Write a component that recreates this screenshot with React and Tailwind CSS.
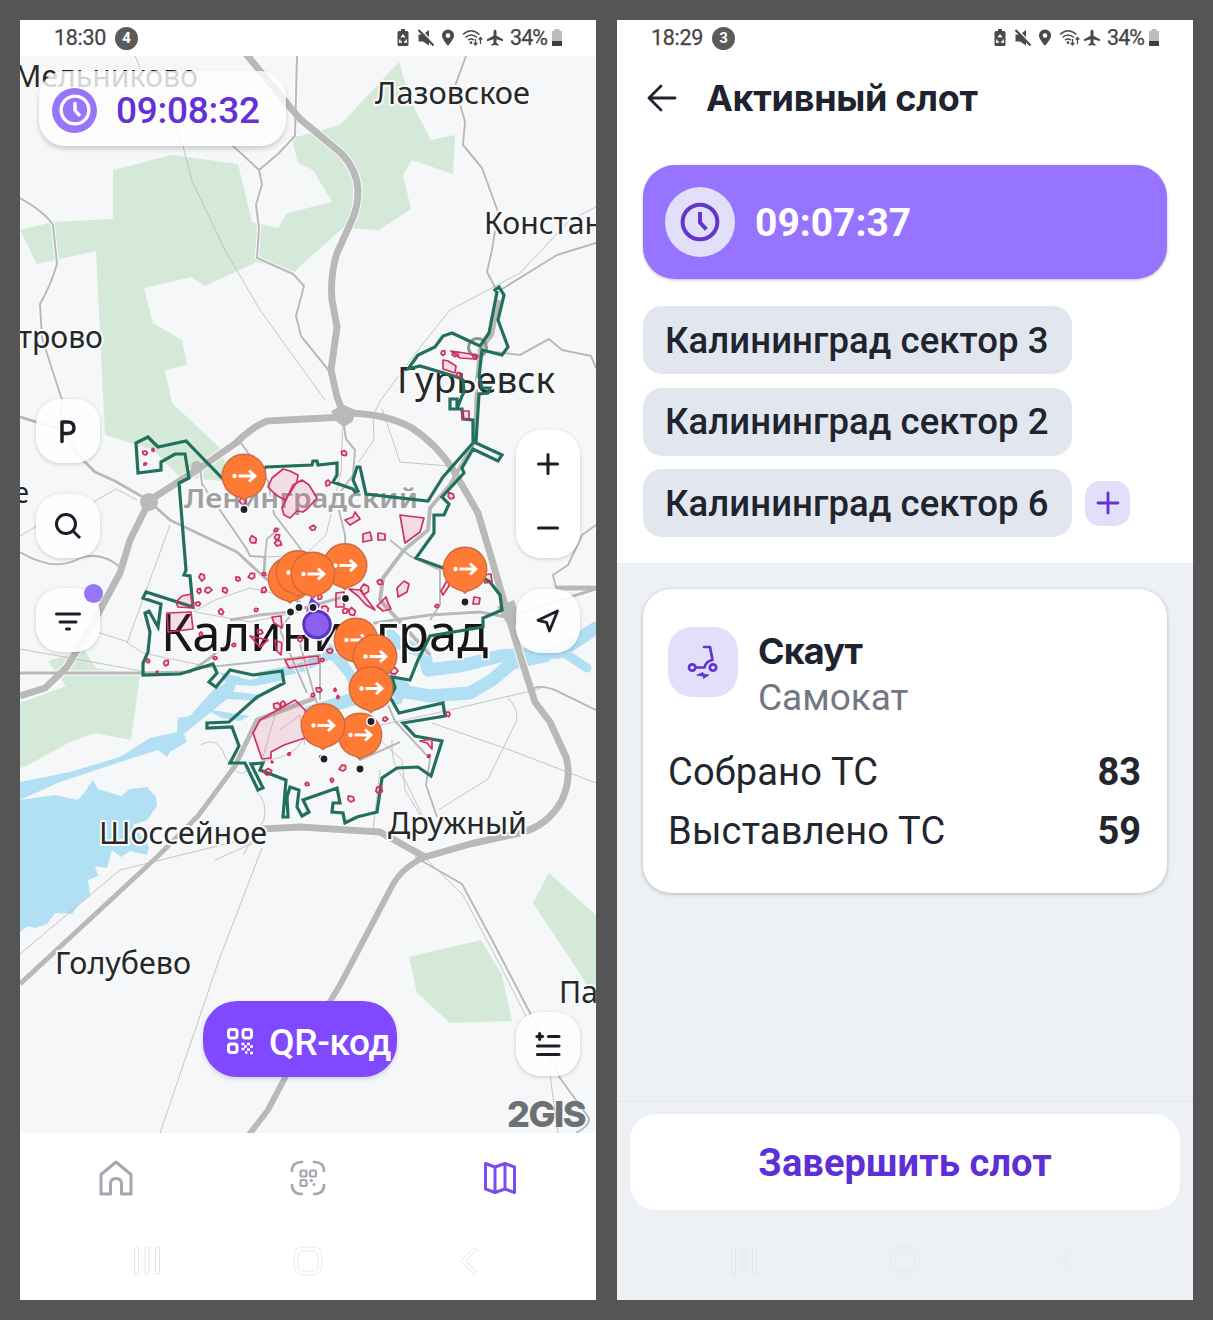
import React from "react";

const greens = [
  "20,230 53,222 113,219 113,170 172,155 238,164 252,222 278,228 287,213 300,210 332,202 313,170 298,163 291,136 300,136 340,125 399,62 410,100 431,140 455,135 453,174 412,160 403,175 411,209 379,230 343,228 300,266 295,272 257,262 205,286 191,277 144,288 153,323 182,340 187,365 165,370 172,403 220,448 232,482 180,477 153,450 105,435 96,251 37,264",
  "48,661 84,650 96,668 140,675 131,740 95,733 70,742 30,764 20,768 20,703 66,686",
  "409,957 481,940 502,975 512,1021 450,1023 417,993",
  "549,873 596,915 596,1004 581,975 533,903",
];

const water = [
  "20,800 55,795 78,800 84,793 93,780 98,789 121,796 130,789 147,787 156,797 157,806 147,820 133,825 149,847 147,855 130,851 121,857 112,850 107,868 95,866 98,876 88,880 90,895 78,905 72,914 55,913 47,924 35,928 28,926 20,932",
  "20,782 70,772 120,757 150,738 177,732 178,718 190,716 213,690 240,675 232,695 206,716 184,734 187,742 170,752 167,757 158,750 120,762 60,782 20,800",
  "216,690 262,695 257,701 213,698",
  "205,709 250,716 240,721 222,718",
  "220,672 250,680 282,671 284,680 255,686 226,684",
];

const waterLines = [
  { d: "M262 676 L300 668 L330 655 L342 660 L352 680", w: 9 },
  { d: "M328 648 L342 665 L350 674", w: 10 },
  { d: "M310 712 L350 700 L395 690 L430 696 L470 693 L492 680 L512 663 L545 656", w: 13 },
  { d: "M388 633 L396 642 L424 652 L428 670 L460 666 L500 656 L560 652 L596 628", w: 13 },
  { d: "M560 650 L572 658 L587 668", w: 9 },
  { d: "M380 670 L405 686 L398 700", w: 9 },
];

const roads = [
  { w: 7, d: "M246 54 L300 119 L341 153 Q357 170 358 190 Q358 207 352 220 L337 253 Q330 275 332 300 L337 327 L331 370 L337 397 L344 415" },
  { w: 7, d: "M344 417 L267 421 Q252 427 236 443 L200 468 L150 500 L130 540 L120 573 L93 623 L67 667 L45 688 L20 696" },
  { w: 7, d: "M344 413 Q385 413 412 428 Q436 444 452 468 L478 513 L492 560 L505 605 L520 655 L535 702 L550 722 L566 757 Q572 778 562 800 Q548 826 520 833 L470 844 L425 857 L380 832 L300 827 L262 829" },
  { w: 6, d: "M425 857 Q400 868 390 890 L340 985 L290 1068 L268 1110 L248 1136" },
  { w: 5, d: "M315 698 L257 720 L235 766 L198 816 L157 857 L20 984" },
  { w: 3, d: "M148 500 L115 481 L95 472 L78 455 L62 430 L20 417" },
  { w: 2, d: "M20 198 Q45 212 53 225 L57 264 Q51 285 40 304 L42 338 L62 400 L60 430" },
  { w: 2, d: "M297 56 L295 136 L278 154 L259 170 L262 184 L256 205 L259 228 L257 258 L293 274 L304 286 L296 316 L301 336 L330 372" },
  { w: 2, d: "M232 145 L259 170" },
  { w: 1, d: "M135 56 Q148 91 170 110 L183 146 L192 181 L225 250 L260 310 L325 400" },
  { w: 2, d: "M466 56 L455 86 L465 122 L463 145 L482 168 L498 212 L492 250 L487 272 L496 289" },
  { w: 2, d: "M502 289 L557 255 L596 243" },
  { w: 1, d: "M596 207 L570 220 L520 273 L450 310 L418 350 L380 401 L374 414" },
  { w: 2, d: "M478 350 L520 355 L549 339 L562 350 L591 356 L596 368" },
  { w: 4, d: "M499 300 L492 335 L480 350 L477 380 L475 441 L450 485 L430 508 L428 530 L404 550 L383 578 L380 600 L430 655" },
  { w: 2, d: "M20 552 Q55 573 80 558 Q101 551 120 567" },
  { w: 1, d: "M20 536 L50 518 L85 507 L116 489 L137 500" },
  { w: 1, d: "M97 632 L125 641 L143 653 L200 665" },
  { w: 1, d: "M170 525 L127 643" },
  { w: 3, d: "M150 502 L170 520 L237 552 L265 578 L300 603" },
  { w: 2, d: "M200 468 L202 484 L246 548 L250 556 L265 557 L267 539 L280 528" },
  { w: 2, d: "M241 443 L268 481 L274 514 L300 548 L315 573" },
  { w: 2, d: "M343 419 L346 439 L355 450 L353 475 L336 498 L345 535 L346 568" },
  { w: 1, d: "M343 420 L341 472 L326 535 L305 555 L265 557 M373 415 L374 440 L358 463 M382 409 L400 462 L449 466" },
  { w: 3, d: "M265 557 L264 575 M230 620 L260 615 L290 612 L343 597" },
  { w: 1, d: "M193 612 L215 600 L250 588 L285 596 M195 612 L250 622 L300 612" },
  { w: 3, d: "M318 635 L380 622 L430 615 L480 612 L506 617 L596 589" },
  { w: 5, d: "M556 588 L596 588" },
  { w: 2, d: "M596 525 L582 535 L568 565 L553 575 L556 588" },
  { w: 2, d: "M390 540 L410 556 L440 570 L440 605 L430 620" },
  { w: 2, d: "M200 668 L320 655 L320 700 M300 644 L320 715 L360 760 L400 742" },
  { w: 2, d: "M300 601 L280 630 L296 668 L307 693" },
  { w: 3, d: "M20 673 L143 673 L190 672 L210 658 L230 640" },
  { w: 1, d: "M201 745 Q218 735 225 757 Q239 778 245 772 L262 761 Q293 758 303 740 L320 733" },
  { w: 1, d: "M255 790 Q268 800 264 820 L243 855 M215 860 L260 840" },
  { w: 2, d: "M388 705 L395 721 L430 759 L426 785 L437 817" },
  { w: 1, d: "M372 727 L450 710 L535 690 L545 686" },
  { w: 2, d: "M534 688 Q541 685 555 690 L596 710" },
  { w: 1, d: "M432 723 L510 750 L596 783" },
  { w: 1, d: "M508 698 Q520 710 516 722 L488 779 L438 810" },
  { w: 1, d: "M378 738 L402 760 L405 790 L420 815 M392 740 Q390 765 405 780 L422 815 M380 770 L373 830" },
  { w: 1, d: "M20 649 L120 667 L160 675" },
  { w: 1, d: "M262 848 L220 957 L160 1133" },
  { w: 1, d: "M425 858 L463 895 L500 965 L548 1060 L558 1133" },
  { w: 2, d: "M415 857 L462 884 L492 940 L530 1013 L560 1078 L589 1118 Q590 1126 576 1133" },
  { w: 1, d: "M20 954 L120 870 L262 835" },
  { w: 1, d: "M263 757 L275 715 L310 700 M280 730 L300 715 L305 745" },
];

const boundary =
  "136,443 148,437 158,447 186,441 222,478 240,490 266,467 312,465 313,461 317,461 318,465 337,463 337,475 333,482 353,489 355,492 358,491 353,480 357,467 360,467 366,494 428,501 443,477 473,443 473,420 463,419 462,409 450,409 450,399 457,399 457,409 462,396 464,392 463,380 457,377 420,366 408,369 418,355 435,347 443,336 452,333 480,346 489,333 497,292 495,290 499,287 504,295 498,320 508,347 502,355 482,350 479,377 482,388 490,388 488,393 479,394 476,443 502,455 498,461 473,449 462,468 464,473 442,497 449,504 444,515 434,515 434,533 416,558 443,568 470,570 490,582 500,595 502,610 483,618 483,627 430,636 418,660 410,680 392,677 395,688 390,697 399,713 443,703 445,716 403,723 415,736 442,741 431,776 418,767 397,768 382,778 377,812 357,817 345,823 343,813 332,812 333,803 340,803 337,788 303,800 309,812 302,816 297,807 299,790 290,787 287,797 288,817 283,817 286,780 260,770 263,763 251,764 263,788 258,790 245,763 230,763 239,746 232,727 207,728 207,723 229,722 257,697 284,683 282,671 253,675 230,670 216,687 209,682 217,673 213,664 180,674 143,675 143,663 148,652 150,632 145,613 149,611 158,627 161,604 143,598 146,592 193,607 190,576 184,575 186,570 179,483 189,478 185,454 175,454 161,462 161,470 138,473";

const bigZones = [
  "268,487 272,478 283,469 290,471 298,475 297,482 285,500 276,495",
  "302,480 309,485 317,498 308,508 303,512 297,511 290,518 284,515 282,508 286,500 293,485",
  "400,515 424,518 420,532 405,543",
  "253,733 260,720 295,700 305,710 320,733 305,738 284,745 271,752 271,758 262,759",
  "285,660 318,656 319,663 289,668",
  "176,602 182,596 191,594 193,608 178,607",
  "167,613 191,612 193,629 168,632",
  "250,636 268,640 260,647",
  "443,360 448,361 456,366 455,373 443,369",
  "451,351 477,355 475,359 460,358",
  "349,589 360,590 375,610 366,605 358,596",
  "397,588 404,581 409,584 407,592 398,597",
  "377,606 386,597 388,603 391,609 383,611",
  "441,591 448,579 449,586 443,595",
  "272,617 281,616 282,628 274,623",
  "275,640 282,643 281,655 276,650",
  "345,520 353,517 355,512 360,519 350,525",
  "363,534 370,532 372,540 363,542",
  "378,533 385,534 385,540 378,540",
  "462,411 469,411 469,419 462,419",
  "336,593 344,592 344,607 336,607",
  "420,741 432,739 432,749 427,743",
  "474,597 480,598 479,604 473,604",
  "483,575 491,574 492,582 485,583",
];

const smallZones = [
  [145, 453, 2.5], [153, 450, 1.5], [145, 464, 1.5], [344, 453, 3], [328, 483, 3], [313, 528, 3], [253, 540, 4], [277, 537, 3], [278, 543, 3.5],
  [202, 577, 3.5], [252, 576, 3.5], [238, 579, 2.5], [199, 591, 2.5], [208, 590, 3.5], [225, 590, 3], [264, 590, 3], [198, 604, 2.5],
  [221, 612, 3], [256, 610, 2], [264, 574, 2], [201, 634, 2], [234, 645, 2], [148, 661, 2], [166, 663, 3], [215, 658, 2],
  [243, 501, 4], [276, 530, 2], [260, 632, 3], [300, 639, 3], [312, 614, 3], [325, 609, 4], [320, 597, 2.5], [330, 651, 3],
  [352, 612, 4], [345, 611, 3], [380, 582, 3], [365, 589, 5], [437, 606, 2], [451, 496, 3.5], [443, 353, 2.5], [455, 354, 3],
  [459, 375, 3], [313, 695, 2], [319, 690, 3], [335, 690, 1.5], [322, 660, 2], [277, 706, 4], [283, 704, 3], [268, 772, 4],
  [272, 762, 1], [289, 754, 1.5], [307, 784, 2], [332, 780, 2], [343, 768, 3.5], [351, 799, 3.5], [379, 790, 4], [385, 719, 2.5],
  [448, 714, 2.5], [429, 756, 1.5], [394, 671, 4], [475, 357, 2.5], [157, 672, 1], [356, 657, 3], [338, 697, 1.5],
];

const labels = [
  { t: "Мельниково", x: 14, y: 87, len: 184, s: 31 },
  { t: "Лазовское", x: 375, y: 104, len: 155, s: 31 },
  { t: "Констант", x: 484, y: 234, len: 133, s: 31 },
  { t: "трово", x: 18, y: 348, len: 85, s: 31 },
  { t: "Гурьевск", x: 397, y: 393, len: 158, s: 37 },
  { t: "е", x: 14, y: 503, len: 15, s: 29 },
  { t: "Шоссейное", x: 99, y: 844, len: 168, s: 31 },
  { t: "Дружный", x: 388, y: 834, len: 139, s: 31 },
  { t: "Голубево", x: 55, y: 974, len: 136, s: 31 },
  { t: "Па", x: 559, y: 1003, len: 39, s: 31 },
];

const markers = [
  [244, 476], [465, 569], [345, 565.5], [290, 579], [298, 572.5], [313, 574],
  [356, 640], [375, 656.5], [360, 735], [371, 688.5], [323, 725.5],
];
const dots = [
  [244, 509.5], [465, 602], [345.5, 598.5], [290.5, 612], [299, 607.5], [313, 607.5], [324, 759], [371, 721.5], [360, 769],
];

function Marker({ x, y }) {
  return (
    <g transform={`translate(${x} ${y})`}>
      <path d="M-7 20.500 Q-2 21.500 0 24 Q2 21.500 7 20.500 A21.700 21.700 0 1 0 -7 20.500Z" fill="#ff7a35" stroke="#cf6a3b" strokeWidth="1.4" />
      <circle cx="-9.5" cy="0" r="2.200" fill="#fff" />
      <path d="M-5.500 0 H10.5 M5 -5.500 L10.8 0 L5 5.500" fill="none" stroke="#fff" strokeWidth="3" />
    </g>
  );
}

function CityMap() {
  return (
    <svg className="block h-full w-full" viewBox="20 56 576 1077" fontFamily="'Noto Sans', sans-serif">
      <rect x="20" y="56" width="576" height="1077" fill="#f5f7f9" />
      <g fill="#d4e9d8">{greens.map((p) => <polygon key={p} points={p} />)}</g>
      <g fill="#b1dff3">{water.map((p) => <polygon key={p} points={p} />)}</g>
      <g fill="none" stroke="#b1dff3" strokeLinejoin="round" strokeLinecap="round">
        {waterLines.map((r) => <path key={r.d} d={r.d} strokeWidth={r.w} />)}
      </g>
      <g fill="none" stroke="#fafbfc" strokeLinejoin="round">
        {roads.filter((r) => r.w > 1).map((r) => <path key={r.d} d={r.d} strokeWidth={r.w + 2} />)}
      </g>
      <g fill="none" stroke="#b9b9b9" strokeLinejoin="round">
        {roads.map((r) => <path key={r.d} d={r.d} strokeWidth={r.w === 1 ? 0.8 : r.w} />)}
      </g>
      <g fill="#b9b9b9">
        <path d="M331 411 L344 405 L357 411 L352 422 L344 427 L337 422Z" />
        <circle cx="149" cy="502" r="9" />
        <circle cx="197" cy="467" r="6" />
        <path d="M497 607 L514 600 L520 618 L512 632Z" />
      </g>
      <circle cx="477.500" cy="347.500" r="9" fill="none" stroke="#8f9391" strokeWidth="3" />
      <g stroke="#f8fafb" strokeWidth="4" strokeLinejoin="round" fill="#272727">
        {labels.map((l) => (
          <text key={l.t} className="[paint-order:stroke]" x={l.x} y={l.y} fontSize={l.s} textLength={l.len} lengthAdjust="spacingAndGlyphs">{l.t}</text>
        ))}
        <text className="[paint-order:stroke]" x="184" y="508" fontSize="27.500" fontWeight="600" fill="#a19f9f" textLength="234" lengthAdjust="spacingAndGlyphs">Ленинградский</text>
        <text className="[paint-order:stroke]" x="161" y="651" fontSize="51" fill="#161616" textLength="327" lengthAdjust="spacingAndGlyphs">Калининград</text>
      </g>
      <polygon points={boundary} fill="none" stroke="#226f5b" strokeWidth="3.200" />
      <g fill="#e6305c" fillOpacity="0.13" stroke="#cf315c" strokeWidth="1.7" strokeLinejoin="round">
        {bigZones.map((p) => <polygon key={p} points={p} />)}
        {smallZones.map(([x, y, r], i) => (
          <path
            key={`${x}-${y}`}
            transform={`rotate(${(i * 67) % 360} ${x} ${y})`}
            d={`M${x - r} ${y - r * 0.6} L${x + r * 0.4} ${y - r * 0.8} L${x + r} ${y + r * 0.1} L${x + r * 0.2} ${y + r * 0.8} L${x - r * 0.7} ${y + r * 0.5}Z`}
          />
        ))}
      </g>
      {markers.map(([x, y]) => <Marker key={`${x}-${y}`} x={x} y={y} />)}
      <path d="M306 612 L311 597 L320 605 L316 613Z" fill="#6f3ddb" />
      <circle cx="317" cy="624.500" r="16.500" fill="#fff" fillOpacity="0.9" />
      <circle cx="317" cy="624.500" r="13.300" fill="#8b60ef" stroke="#5b34c5" strokeWidth="3" />
      <g fill="#1d2027" stroke="#fff" strokeWidth="1.6">
        <circle cx="321.500" cy="757.500" r="3.500" />
        {dots.map(([x, y]) => <circle key={`${x}-${y}`} cx={x} cy={y} r="4.200" />)}
      </g>
    </svg>
  );
}

function StatusBar({ time, count }) {
  return (
    <div className="flex h-9 shrink-0 items-center bg-white pl-[34px] pr-[33px] text-[21.5px] leading-none text-[#454545] [-webkit-text-stroke:0.25px_#454545]">
      <span className="w-[52px] whitespace-nowrap tracking-[-0.3px]">{time}</span>
      <span className="ml-[9px] flex h-[23px] w-[23px] items-center justify-center rounded-full bg-[#5b5b5b] text-[15px] font-bold text-white [-webkit-text-stroke:0px]">{count}</span>
      <svg className="ml-auto" width="109" height="22" viewBox="0 0 109 22" fill="#4a4a4a">
        <path d="M3 4H5V2H9V4H11Q12.500 4 12.500 5.500V17.500Q12.500 19 11 19H3Q1.500 19 1.500 17.500V5.500Q1.500 4 3 4Z" />
        <path d="M5.200 10.500L7 8L8.800 10.500M10 12.500L10.500 15H8M6 15H3.500L4 12.500" fill="none" stroke="#fff" strokeWidth="1.300" />
        <path d="M22.500 7.500H27L33 3V18.500L27 14.500H22.500Z" />
        <path d="M24.500 2.500L38.500 17" stroke="#fff" strokeWidth="1.600" />
        <path d="M22.500 3L37.500 18.500" stroke="#4a4a4a" strokeWidth="2.200" />
        <path d="M52 2.500a6.100 6.100 0 0 0-6.100 6.100C45.900 12 52 19 52 19s6.100-7 6.100-10.400A6.100 6.100 0 0 0 52 2.500Z" />
        <circle cx="52" cy="8.600" r="2.300" fill="#fff" />
        <g fill="none" stroke="#4a4a4a" strokeWidth="1.500">
          <path d="M67 7.500Q75 0 83.500 7.500M69.500 10.500Q75 5.500 81 10.500M72 13.200Q75 10.800 78 13.200" />
          <path d="M79.500 12V18M77.700 16L79.500 18L81.300 16M84.500 17V10.500M82.700 12.500L84.500 10.500L86.300 12.500" strokeWidth="1.300" />
        </g>
        <circle cx="75" cy="15.700" r="1.400" />
        <path d="M99 2.500Q100.500 2.500 100.500 5V8.800L107 12.300V14.300L100.500 12.300V16L102.500 17.300V18.800L99 18L95.500 18.800V17.300L97.500 16V12.300L91 14.300V12.300L97.500 8.800V5Q97.500 2.500 99 2.500Z" />
      </svg>
      <span className="ml-[5px] w-[40px] whitespace-nowrap tracking-[-0.9px]">34%</span>
      <svg className="ml-[1px]" width="12" height="18" viewBox="0 0 12 18">
        <path d="M3.500 0H8.500V2H11V12H1V2H3.500Z" fill="#bdbdbd" />
        <path d="M1 12H11V17H1Z" fill="#3f3f3f" />
      </svg>
    </div>
  );
}

function SystemNav() {
  return (
    <div className="flex h-20 shrink-0 items-center justify-between px-[113px] pt-[2px]">
      <svg width="28" height="30" viewBox="0 0 28 30" fill="none" stroke="#e3e5e9" strokeWidth="1">
        <rect x="1.500" y="1.500" width="4" height="27" rx="1.500" />
        <rect x="12" y="1.500" width="4" height="27" rx="1.500" />
        <rect x="22.500" y="1.500" width="4" height="27" rx="1.500" />
      </svg>
      <svg width="30" height="30" viewBox="0 0 30 30" fill="none" stroke="#e8e9ed" strokeWidth="1">
        <rect x="1" y="1" width="28" height="28" rx="8" />
        <rect x="5" y="5" width="20" height="20" rx="5" />
      </svg>
      <svg width="28" height="30" viewBox="0 0 28 30" fill="none" stroke="#e3e5e9" strokeWidth="1">
        <path d="M19 1.500L5.500 15L19 28.500L21.500 26L11 15L21.500 4Z" />
      </svg>
    </div>
  );
}

function MapButton({ className = "", children }) {
  return (
    <div className={`flex h-16 w-16 items-center justify-center rounded-[25px] bg-white/90 text-[#1b1e28] shadow-[0_1px_4px_rgba(0,0,0,0.18)] ${className}`}>
      {children}
    </div>
  );
}

function Clock({ size, stroke }) {
  return (
    <svg width={size} height={size} viewBox="0 0 38 38" fill="none" stroke="currentColor" strokeWidth={stroke}>
      <circle cx="19" cy="19" r="16.500" />
      <path d="M19 9.500V19.500L25 26" />
    </svg>
  );
}

function MapScreen() {
  return (
    <section className="flex h-[1280px] w-[576px] flex-col overflow-hidden bg-white">
      <StatusBar time="18:30" count="4" />
      <div className="relative h-[1077px] shrink-0 overflow-hidden">
        <CityMap />
        <div className="absolute left-[19px] top-[15px] flex h-[75px] w-[247px] items-center rounded-[26px] bg-white/80 pl-[13px] pt-[3px] shadow-[0_3px_5px_rgba(0,0,0,0.18)]">
          <div className="flex h-[45px] w-[45px] items-center justify-center rounded-full bg-[#9775fa] text-white">
            <Clock size={32} stroke={4} />
          </div>
          <span className="ml-[19px] whitespace-nowrap text-[37px] font-medium leading-none tracking-[-0.25px] text-[#6430d8]">09:08:32</span>
        </div>
        <div className="absolute left-4 top-[343px] flex flex-col gap-[30.500px]">
          <MapButton>
            <svg width="18" height="26" viewBox="0 0 18 26" fill="none" stroke="currentColor" strokeWidth="3.500" strokeLinecap="round" strokeLinejoin="round">
              <path d="M3 23.500V4H8.500Q15 4 15 9.800Q15 15.500 8.500 15.500H3" />
            </svg>
          </MapButton>
          <MapButton>
            <svg width="28" height="28" viewBox="0 0 28 28" fill="none" stroke="currentColor" strokeWidth="3">
              <circle cx="12" cy="12" r="9.500" />
              <path d="M18.800 18.800L26 26" />
            </svg>
          </MapButton>
          <MapButton className="relative">
            <svg className="mt-1" width="28" height="20" viewBox="0 0 28 20" fill="none" stroke="currentColor" strokeWidth="3" strokeLinecap="round">
              <path d="M2.500 2H25.500M6 10H22M12.500 17H15.500" />
            </svg>
            <span className="absolute -top-1 left-[48px] h-[19px] w-[19px] rounded-full bg-[#9775fa]" />
          </MapButton>
        </div>
        <div className="absolute right-4 top-[374px] flex flex-col gap-[31px] text-[#1b1e28]">
          <div className="flex h-32 w-16 flex-col items-center justify-between rounded-[25px] bg-white/95 py-[23px] shadow-[0_1px_4px_rgba(0,0,0,0.18)]">
            <svg width="22" height="22" viewBox="0 0 22 22" stroke="currentColor" strokeWidth="3" strokeLinecap="round">
              <path d="M1.500 11H20.500M11 1.500V20.500" />
            </svg>
            <svg width="22" height="14" viewBox="0 0 22 14" stroke="currentColor" strokeWidth="3" strokeLinecap="round">
              <path d="M1.500 7H20.500" />
            </svg>
          </div>
          <MapButton>
            <svg width="26" height="26" viewBox="0 0 26 26" fill="none" stroke="currentColor" strokeWidth="2.800" strokeLinejoin="round">
              <path d="M22.500 3L3 12.300L11.500 14.300L14.500 23Z" />
            </svg>
          </MapButton>
        </div>
        <div className="absolute left-[183px] top-[945px] flex h-[76px] w-[194px] items-center rounded-[34px] bg-[#8049ff] pl-[23px] text-white shadow-[0_2px_4px_rgba(0,0,0,0.15)]">
          <svg className="mt-1 shrink-0" width="28" height="28" viewBox="0 0 28 28" fill="none" stroke="currentColor" strokeWidth="3">
            <rect x="2.500" y="2.500" width="8.500" height="8.500" rx="2.500" />
            <rect x="17" y="2.500" width="8.500" height="8.500" rx="2.500" />
            <rect x="2.500" y="17" width="8.500" height="8.500" rx="2.500" />
            <path d="M15.500 17H18.500M21 17H24M18 19.500H21M24 19.500H27M15.500 22H18.500M21 22.500H24M19 25.500H21.500M24 26H27" strokeWidth="2.500" />
          </svg>
          <span className="ml-[15px] mt-[7px] whitespace-nowrap text-[37px] font-medium leading-none tracking-[-0.3px]">QR-код</span>
        </div>
        <MapButton className="absolute right-4 top-[956px]">
          <svg width="26" height="26" viewBox="0 0 26 26" fill="none" stroke="currentColor" strokeWidth="3.200" strokeLinecap="round">
            <path d="M2 5.500H7.500M4.700 2.700V8.300M13.500 5.500H24M2.500 15H24M2.500 23.500H24" />
          </svg>
        </MapButton>
        <span className="absolute left-[487px] top-[1040px] whitespace-nowrap font-['Inter'] text-[36px] font-extrabold leading-[36px] tracking-[-1.5px] text-[#6d7174]">2GIS</span>
      </div>
      <div className="grid h-[87px] shrink-0 grid-cols-3 items-center justify-items-center pt-[2px] text-[#a4a7af]">
        <svg width="34" height="36" viewBox="0 0 34 36" fill="none" stroke="currentColor" strokeWidth="3" strokeLinejoin="round">
          <path d="M2 14.500L17 2L32 14.500V34H22.500V24Q22.500 18.500 17 18.500Q11.500 18.500 11.500 24V34H2Z" />
        </svg>
        <svg width="36" height="36" viewBox="0 0 36 36" fill="none" stroke="currentColor" strokeWidth="2.600" strokeLinecap="round">
          <path d="M2 11Q2 2 12 2M24 2Q34 2 34 11M34 25Q34 34 24 34M12 34Q2 34 2 25" />
          <g strokeWidth="2.200">
            <rect x="10.500" y="10.500" width="6" height="6" rx="1.500" />
            <rect x="20" y="10.500" width="6" height="6" rx="1.500" />
            <rect x="10.500" y="20" width="6" height="6" rx="1.500" />
            <path d="M21 20.500H21.500M24 24.500V24.600" strokeWidth="3" />
          </g>
        </svg>
        <svg className="text-[#7a4df0]" width="34" height="34" viewBox="0 0 34 34" fill="none" stroke="currentColor" strokeWidth="3" strokeLinejoin="round">
          <path d="M2.500 2.500L12 6L22 2.500L31.500 6V31.500L22 28L12 31.500L2.500 28ZM12 6V31.500M22 2.500V28" />
        </svg>
      </div>
      <SystemNav />
    </section>
  );
}

const sectors = ["Калининград сектор 3", "Калининград сектор 2", "Калининград сектор 6"];

function SlotScreen() {
  return (
    <section className="flex h-[1280px] w-[576px] flex-col overflow-hidden bg-[#edf0f5]">
      <StatusBar time="18:29" count="3" />
      <div className="h-[507px] shrink-0 bg-white px-[26px]">
        <div className="flex h-[109px] items-center pb-[25px] text-[#1e2330]">
          <svg className="ml-1" width="31" height="28" viewBox="0 0 31 28" fill="none" stroke="currentColor" strokeWidth="2.800" strokeLinecap="round" strokeLinejoin="round">
            <path d="M28 14H2M14 2L2 14L14 26" />
          </svg>
          <h1 className="-mt-px ml-[28px] whitespace-nowrap font-['Inter'] text-[36px] font-bold leading-none tracking-[-0.3px]">Активный слот</h1>
        </div>
        <div className="flex h-[114px] items-center rounded-[32px] bg-[#9674ff] pl-[22px] shadow-[0_1px_3px_rgba(0,0,0,0.25)]">
          <div className="flex h-[70px] w-[70px] items-center justify-center rounded-full bg-[#e2dffa] text-[#6136c9]">
            <Clock size={40} stroke={3.8} />
          </div>
          <span className="ml-5 mt-[3px] whitespace-nowrap text-[39px] font-bold leading-none text-white">09:07:37</span>
        </div>
        <div className="mt-[27px] flex flex-col gap-[13.500px]">
          {sectors.map((name, i) => (
            <div key={name} className="flex items-center gap-[13px]">
              <span className="flex h-[68px] w-[429px] items-center whitespace-nowrap rounded-[19px] bg-[#e2e6ee] pl-[22px] pt-[2px] text-[36.500px] font-medium tracking-[0.08px] text-[#20242e]">{name}</span>
              {i === 2 && (
                <span className="flex h-[45px] w-[45px] items-center justify-center rounded-[15px] bg-[#e2dffa] text-[#6530d8]">
                  <svg width="24" height="24" viewBox="0 0 24 24" stroke="currentColor" strokeWidth="2.800" strokeLinecap="round">
                    <path d="M2 12H22M12 2V22" />
                  </svg>
                </span>
              )}
            </div>
          ))}
        </div>
      </div>
      <div className="h-[538px] shrink-0 px-[26px] pt-[26px]">
        <div className="h-[304px] rounded-[28px] bg-white px-[26px] pt-[38px] shadow-[0_1px_4px_rgba(0,0,0,0.25)]">
          <div className="-ml-px flex items-start">
            <div className="flex h-[70px] w-[70px] items-center justify-center rounded-[24px] bg-[#e2dffa] text-[#6232d6]">
              <svg width="32" height="34" viewBox="0 0 32 34" fill="none" stroke="currentColor" strokeWidth="2.700" strokeLinecap="round" strokeLinejoin="round">
                <path d="M17 2H23L25.500 15Q19 16 17.500 22.500H9" />
                <circle cx="5.200" cy="22.500" r="3.200" />
                <circle cx="26" cy="22.500" r="3.200" />
                <path d="M10 30L16 27.500V29L22 30L16.500 33.500V31.500Z" fill="currentColor" strokeWidth="0.800" />
              </svg>
            </div>
            <div className="ml-[20px] flex flex-col">
              <span className="mt-[4px] font-['Inter'] text-[36px] font-bold leading-[40px] tracking-[-0.9px] text-[#1e2330]">Скаут</span>
              <span className="mt-[6px] text-[37px] leading-[42px] text-[#727782]">Самокат</span>
            </div>
          </div>
          <div className="-ml-px mt-[24px] flex flex-col text-[38px] leading-[58.500px] text-[#23262e]">
            <div className="flex justify-between"><span className="tracking-[0.2px]">Собрано ТС</span><b>83</b></div>
            <div className="flex justify-between"><span className="tracking-[0.2px]">Выставлено ТС</span><b>59</b></div>
          </div>
        </div>
      </div>
      <div className="h-[119px] shrink-0 border-t border-[#e5e8ee] px-[13px] pt-3">
        <button className="h-24 w-full rounded-[26px] bg-white pt-[3px] text-[38px] font-bold tracking-[0.1px] text-[#5d2fd6]">Завершить слот</button>
      </div>
      <SystemNav />
    </section>
  );
}

export default function App() {
  return (
    <main className="flex h-[1320px] w-[1213px] gap-[21px] bg-[#555] p-5 font-['Roboto',sans-serif]">
      <MapScreen />
      <SlotScreen />
    </main>
  );
}
